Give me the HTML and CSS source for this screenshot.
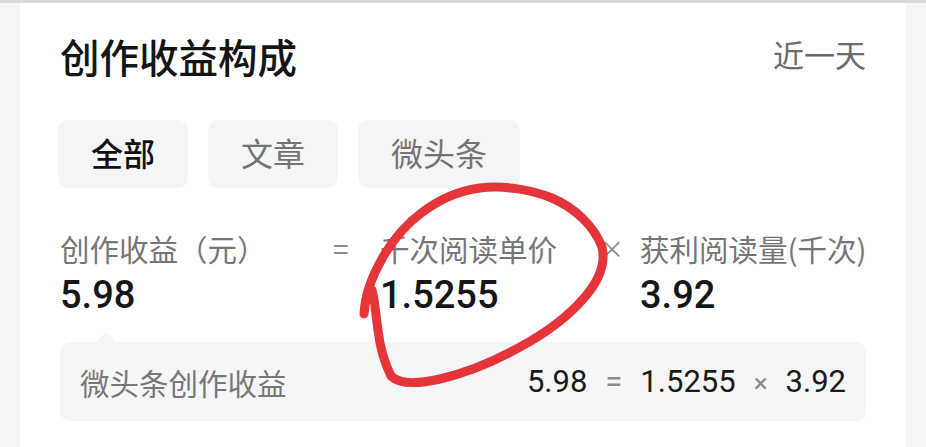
FILE: index.html
```html
<!DOCTYPE html>
<html lang="zh-CN">
<head>
<meta charset="utf-8">
<title>创作收益构成</title>
<link rel="stylesheet" href="styles.css">
</head>
<body>
<div class="page">
  <div class="card">
    <header class="head">
      <h1 class="title">创作收益构成</h1>
      <span class="range">近一天</span>
    </header>
    <div class="tabs">
      <span class="tab active">全部</span>
      <span class="tab">文章</span>
      <span class="tab">微头条</span>
    </div>
    <div class="formula">
      <span class="label">创作收益（元）</span>
      <span class="op">=</span>
      <span class="label">千次阅读单价</span>
      <span class="op times">×</span>
      <span class="label">获利阅读量(千次)</span>
      <span class="value">5.98</span>
      <span></span>
      <span class="value">1.5255</span>
      <span></span>
      <span class="value">3.92</span>
    </div>
    <div class="detail">
      <span class="detail-name">微头条创作收益</span>
      <span class="detail-eq">5.98<i class="dop">=</i>1.5255<i class="dop x">×</i>3.92</span>
    </div>
  </div>
  <svg class="mark" width="926" height="447" viewBox="0 0 926 447">
    <path d="M364 314 C365 296 370 280 383 257 C393 240 404 226 420 214 C438 200 456 191 480 188 C505 185 532 190 552 198 C575 208 594 226 602 247 C606 264 598 282 584 298 C566 319 546 333 520 347 C495 361 470 372 440 379 C418 384 400 385 391 376 C384 362 380 347 378 330 C376 318 375 300 372 290"
      fill="none" stroke="#e5343a" stroke-width="9" stroke-linecap="round" stroke-linejoin="round"/>
  </svg>
</div>
</body>
</html>
```

FILE: styles.css
```css
html, body {
  margin: 0;
  padding: 0;
  background: #f4f5f7;
}

.page {
  position: relative;
  width: 926px;
  height: 447px;
  overflow: hidden;
  border-top: 3px solid #d9d9db;
  box-sizing: border-box;
  padding: 0 20px 0 20px;
  font-family: "Noto Sans CJK SC", "Noto Sans", sans-serif;
}

.card {
  background: #ffffff;
  height: 100%;
  padding: 29px 40px 0 40px;
  box-sizing: border-box;
}

.head {
  display: flex;
  justify-content: space-between;
  align-items: center;
  height: 48px;
}

.title {
  margin: 0;
  font-size: 39.5px;
  font-weight: 500;
  color: #141414;
  line-height: 48px;
}

.range {
  font-size: 31px;
  color: #6b6b6b;
  margin-top: -6px;
}

.tabs {
  display: flex;
  gap: 20px;
  margin-top: 40px;
  margin-left: -2px;
}

.tab {
  height: 68px;
  line-height: 64px;
  padding: 0 33px 4px 33px;
  box-sizing: border-box;
  border-radius: 10px;
  background: #f4f5f7;
  font-size: 32px;
  color: #737373;
}

.tab.active {
  color: #111111;
  font-weight: 500;
}

.formula {
  display: grid;
  grid-template-columns: 273px 47px 220px 40px auto;
  margin-top: 42px;
}

.label {
  font-size: 29.5px;
  line-height: 36px;
  color: #767676;
  white-space: nowrap;
}

.op {
  font-size: 28px;
  line-height: 36px;
  color: #8a8a8a;
}

.op.times {
  font-size: 24px;
}

.value {
  font-family: Roboto, "Noto Sans", sans-serif;
  font-size: 38px;
  font-weight: 500;
  line-height: 46px;
  color: #161616;
  margin-top: 6px;
}

.detail {
  position: relative;
  margin-top: 24px;
  height: 79px;
  background: #f5f6f8;
  border-radius: 10px;
  display: flex;
  align-items: center;
  justify-content: space-between;
  padding: 0 20px;
}

.detail::before {
  content: "";
  position: absolute;
  top: -10px;
  left: 36px;
  border-left: 10px solid transparent;
  border-right: 10px solid transparent;
  border-bottom: 10px solid #f5f6f8;
}

.detail-name {
  font-size: 29.5px;
  color: #777777;
}

.detail-eq {
  font-family: Roboto, "Noto Sans", sans-serif;
  font-size: 31px;
  color: #1a1a1a;
}

.dop {
  font-style: normal;
  color: #8a8a8a;
  margin: 0 18px;
}

.dop.x {
  font-size: 26px;
}

.mark {
  position: absolute;
  top: -3px;
  left: 0;
  pointer-events: none;
}
```
